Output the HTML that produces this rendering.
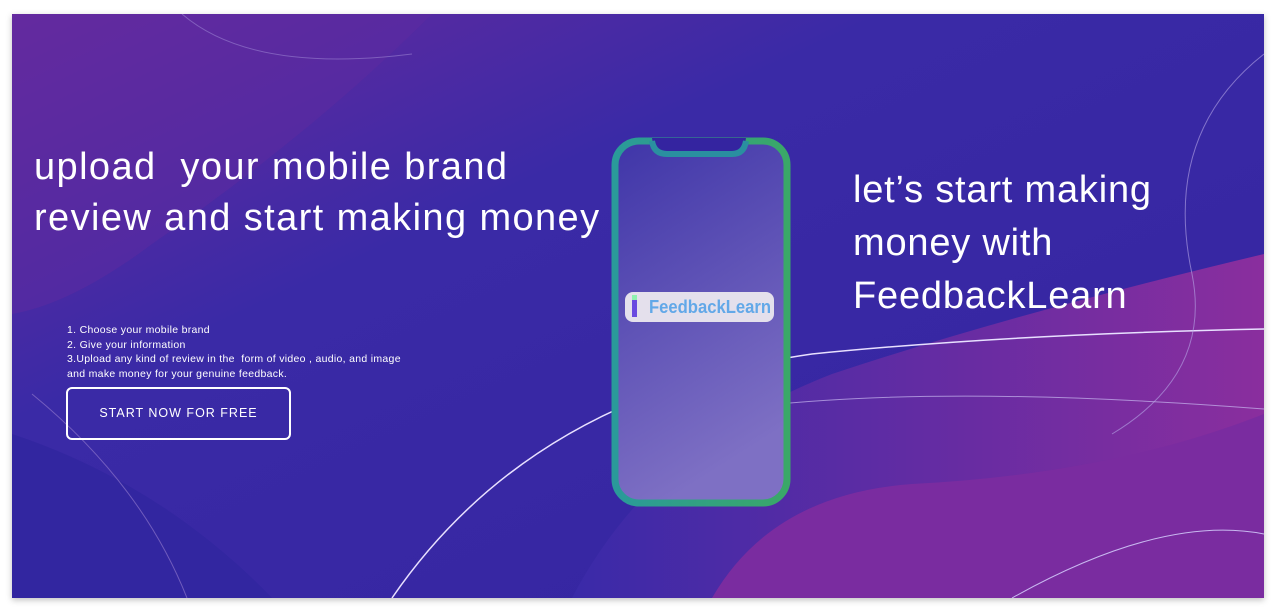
<!DOCTYPE html>
<html><head><style>
body{margin:0;width:1280px;height:609px;background:#fff;position:relative;overflow:hidden;font-family:"Liberation Sans",sans-serif}
.b{position:absolute;left:12px;top:14px;width:1252px;height:584px;overflow:hidden;box-shadow:0 2px 6px rgba(0,0,0,.25)}
.t{position:absolute;color:#fff;white-space:nowrap}
</style></head><body>
<div class="b">
<svg width="1252" height="584" style="position:absolute;left:0;top:0">
<defs>
<linearGradient id="bg" x1="0" y1="0" x2="1" y2="1"><stop offset="0" stop-color="#6a2a9e"/><stop offset=".35" stop-color="#3a2aa6"/><stop offset="1" stop-color="#3424a0"/></linearGradient>
<linearGradient id="p1" x1="0" y1="0" x2="1" y2="0"><stop offset="0" stop-color="#3a2aa8"/><stop offset="1" stop-color="#8a2e9e"/></linearGradient>
<linearGradient id="ph" x1="0" y1="0" x2="0.3" y2="1"><stop offset="0" stop-color="#3f35a8"/><stop offset="1" stop-color="#7e70c4"/></linearGradient>
<linearGradient id="fr" x1="0" y1="0" x2="1" y2="0"><stop offset="0" stop-color="#2a9a9a"/><stop offset="1" stop-color="#3aa868"/></linearGradient>
</defs>
<rect width="1252" height="584" fill="url(#bg)"/>
<path d="M0 0 L420 0 Q300 120 140 230 Q60 290 0 300Z" fill="#5e2aa0" opacity=".5"/>
<path d="M560 584 Q640 430 820 360 Q1000 300 1252 240 L1252 584Z" fill="url(#p1)"/>
<path d="M700 584 Q760 480 900 470 Q1100 460 1252 400 L1252 584Z" fill="#7a2ca0"/>
<path d="M0 584 L0 420 Q150 470 260 584Z" fill="#3226a0"/>
<path d="M170 0 Q240 60 400 40" stroke="#9a80d0" fill="none" opacity=".6"/>
<path d="M20 380 Q130 470 175 584" stroke="#9a80d0" fill="none" opacity=".6"/>
<path d="M380 584 Q520 380 800 340 Q1000 320 1252 315" stroke="#e8e0ff" fill="none" stroke-width="1.5"/>
<path d="M600 420 Q800 360 1252 395" stroke="#c8b8f0" fill="none" opacity=".7"/>
<path d="M1252 40 Q1150 120 1180 260 Q1200 360 1100 420" stroke="#b8a8e8" fill="none" opacity=".6"/>
<path d="M1000 584 Q1150 500 1252 520" stroke="#c8b8f0" fill="none"/>
<rect x="603" y="127" width="172" height="362" rx="24" fill="url(#ph)" stroke="url(#fr)" stroke-width="7"/>
<path d="M640 124 Q642 140 655 140 L720 140 Q732 140 734 124Z" fill="#3424a0"/>
<path d="M640 127 Q642 140 655 140 L720 140 Q732 140 734 127" stroke="#2a8fa0" stroke-width="6" fill="none"/>
<rect x="613" y="278" width="149" height="30" rx="8" fill="#e4e0ec"/>
<rect x="620" y="286" width="5" height="17" fill="#6a4ae0"/>
<rect x="620" y="281" width="5" height="5" fill="#8ef0b0"/>
<text x="637" y="299" font-family="Liberation Sans" font-weight="bold" font-size="18" fill="#62a8e8" textLength="122" lengthAdjust="spacingAndGlyphs">FeedbackLearn</text>
</svg>
<div class="t" style="left:22px;top:128px;font-size:38px;line-height:51px;letter-spacing:1.4px">upload&nbsp; your mobile brand<br>review and start making money</div>
<div class="t" style="left:841px;top:150px;font-size:38px;line-height:53px;letter-spacing:0.8px">let’s start making<br>money with<br>FeedbackLearn</div>
<div class="t" style="left:55px;top:309px;font-size:10.5px;line-height:14.5px;letter-spacing:0.3px">1. Choose your mobile brand<br>2. Give your information<br>3.Upload any kind of review in the&nbsp; form of video , audio, and image<br>and make money for your genuine feedback.</div>
<div class="t" style="left:54px;top:373px;width:221px;height:49px;border:2px solid #fff;border-radius:6px;font-size:12.5px;letter-spacing:1px;text-align:center;line-height:49px">START NOW FOR FREE</div>
</div>
</body></html>
